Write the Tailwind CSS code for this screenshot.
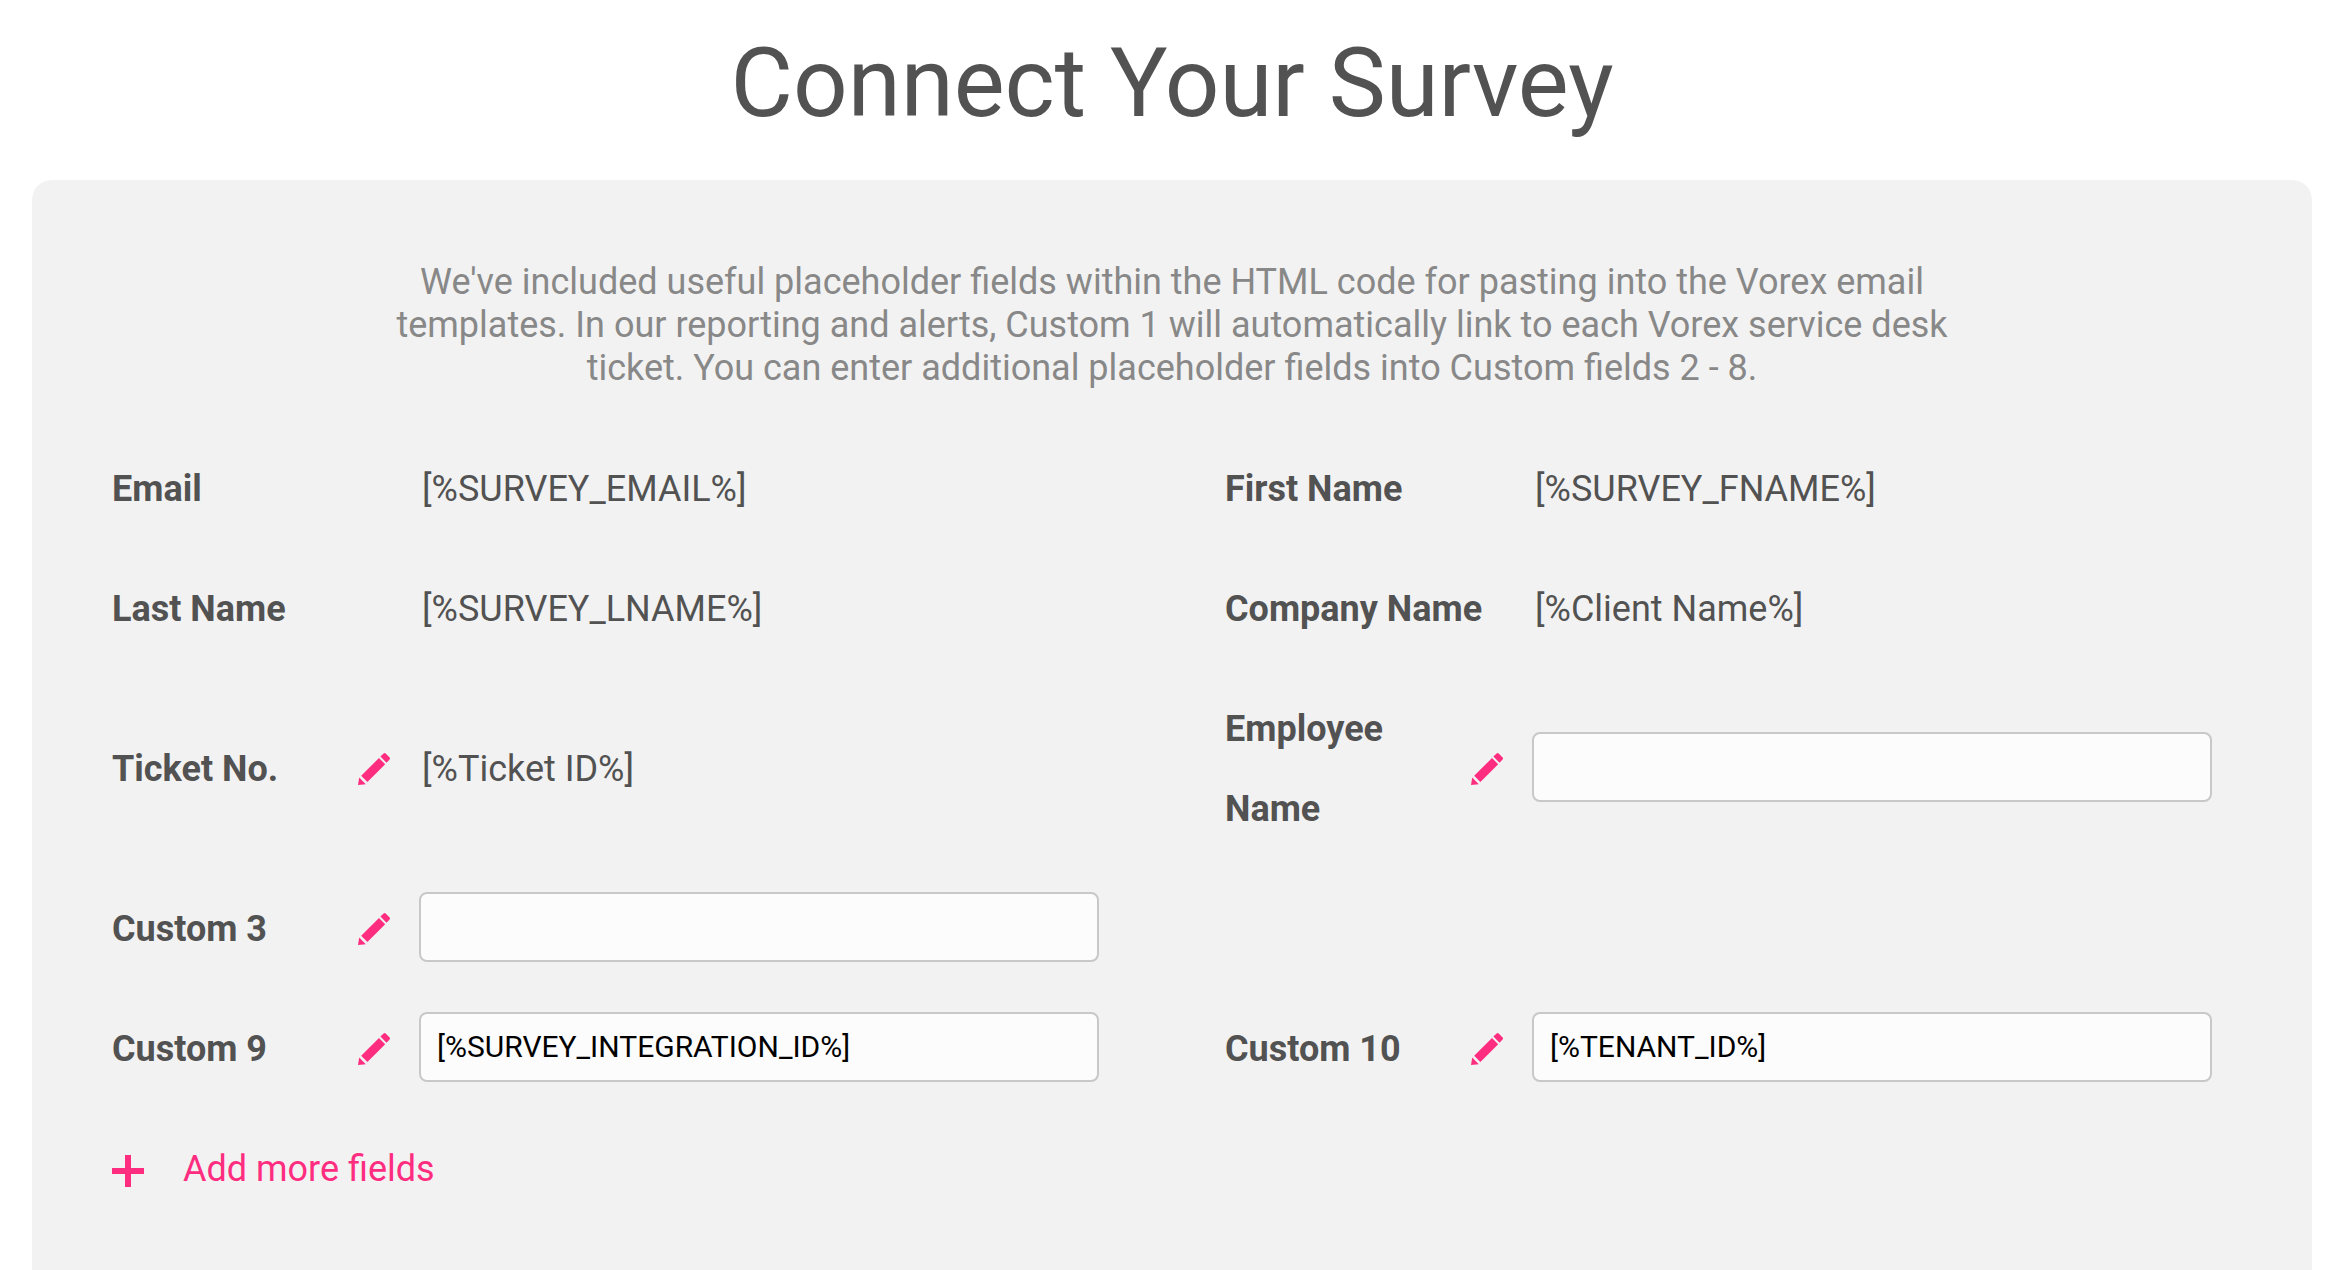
<!DOCTYPE html>
<html lang="en">

<head>
    <meta charset="UTF-8">
    <meta name="viewport" content="width=device-width, initial-scale=1.0">
    <title>Connect Your Survey</title>
    <script src="https://cdn.jsdelivr.net/npm/@tailwindcss/browser@4"></script>
</head>

<body class="bg-white text-[#525252] font-['Roboto',sans-serif] min-h-screen flex flex-col">

    <!-- Icon shapes -->
    <svg class="hidden">
        <symbol id="pencil" viewBox="0 0 32 32">
            <path d="M0 32 L1.200 24.600 L7.800 31.200 Z M3.200 22.800 L21 5 L27.200 11.200 L9.400 29 Z M22.400 3.600 L25.600 0.500 Q26.600 -0.400 27.700 0.500 L31.600 4.400 Q32.500 5.500 31.600 6.600 L28.500 9.700 Z" />
        </symbol>
    </svg>

    <h1 class="text-center text-[96px] leading-[112px] pt-[27px] pb-[41px]">Connect Your Survey</h1>

    <main class="grow bg-[#f2f2f2] rounded-t-[20px] mx-8 px-20 pt-[81px] pb-14">
        <p class="text-center text-[#888] text-[36px] leading-[43px] max-w-[1560px] mx-auto">
            We've included useful placeholder fields within the HTML code for pasting into the Vorex email
            templates. In our reporting and alerts, Custom 1 will automatically link to each Vorex service desk
            ticket. You can enter additional placeholder fields into Custom fields 2 - 8.
        </p>

        <!-- Fields -->
        <div class="grid grid-cols-2 gap-x-[126px] gap-y-10 mt-[59px] mr-5 text-[36px] leading-[80px]">
            <div class="flex items-center">
                <span class="w-[310px] font-bold">Email</span>
                <span>[%SURVEY_EMAIL%]</span>
            </div>
            <div class="flex items-center">
                <span class="w-[310px] font-bold">First Name</span>
                <span>[%SURVEY_FNAME%]</span>
            </div>

            <div class="flex items-center">
                <span class="w-[310px] font-bold">Last Name</span>
                <span>[%SURVEY_LNAME%]</span>
            </div>
            <div class="flex items-center">
                <span class="w-[310px] font-bold">Company Name</span>
                <span>[%Client Name%]</span>
            </div>

            <div class="flex items-center">
                <span class="w-[246px] font-bold">Ticket No.</span>
                <button type="button" aria-label="Edit Ticket No." class="w-16 text-[#ff2d80]"><svg class="size-8 fill-current"><use href="#pencil" /></svg></button>
                <span>[%Ticket ID%]</span>
            </div>
            <div class="flex items-center">
                <label for="employee" class="w-[246px] pr-10 font-bold">Employee Name</label>
                <button type="button" aria-label="Edit Employee Name" class="w-[61px] text-[#ff2d80]"><svg class="size-8 fill-current"><use href="#pencil" /></svg></button>
                <input id="employee" type="text" class="flex-1 min-w-0 h-[70px] mb-1 px-4 pb-0.5 rounded-lg border-2 border-[#c8c8c8] bg-[#fcfcfc] text-[30px] leading-[40px] text-black">
            </div>

            <div class="flex items-center">
                <label for="custom3" class="w-[246px] font-bold">Custom 3</label>
                <button type="button" aria-label="Edit Custom 3" class="w-[61px] text-[#ff2d80]"><svg class="size-8 fill-current"><use href="#pencil" /></svg></button>
                <input id="custom3" type="text" class="flex-1 min-w-0 h-[70px] mb-1 px-4 pb-0.5 rounded-lg border-2 border-[#c8c8c8] bg-[#fcfcfc] text-[30px] leading-[40px] text-black">
            </div>
            <div></div>

            <div class="flex items-center">
                <label for="custom9" class="w-[246px] font-bold">Custom 9</label>
                <button type="button" aria-label="Edit Custom 9" class="w-[61px] text-[#ff2d80]"><svg class="size-8 fill-current"><use href="#pencil" /></svg></button>
                <input id="custom9" type="text" value="[%SURVEY_INTEGRATION_ID%]" class="flex-1 min-w-0 h-[70px] mb-1 px-4 pb-0.5 rounded-lg border-2 border-[#c8c8c8] bg-[#fcfcfc] text-[30px] leading-[40px] text-black">
            </div>
            <div class="flex items-center">
                <label for="custom10" class="w-[246px] font-bold">Custom 10</label>
                <button type="button" aria-label="Edit Custom 10" class="w-[61px] text-[#ff2d80]"><svg class="size-8 fill-current"><use href="#pencil" /></svg></button>
                <input id="custom10" type="text" value="[%TENANT_ID%]" class="flex-1 min-w-0 h-[70px] mb-1 px-4 pb-0.5 rounded-lg border-2 border-[#c8c8c8] bg-[#fcfcfc] text-[30px] leading-[40px] text-black">
            </div>
        </div>

        <button type="button" class="flex items-center gap-[39px] mt-10 text-[36px] leading-[80px] text-[#ff2d80]">
            <svg class="size-8 mt-1 fill-current" viewBox="0 0 32 32"><path d="M13 0h6v13h13v6H19v13h-6V19H0v-6h13z" /></svg>
            Add more fields
        </button>
    </main>

</body>

</html>
